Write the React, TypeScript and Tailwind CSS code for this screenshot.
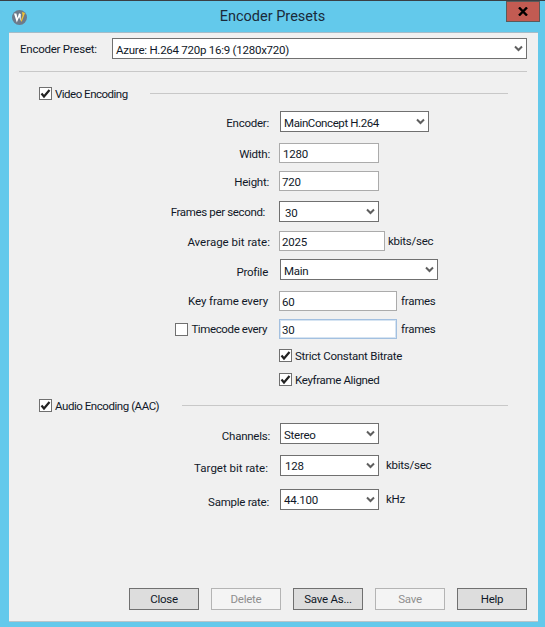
import React from "react";

function Chevron() {
  return (
    <svg width="9" height="7" viewBox="0 0 9 7" className="shrink-0">
      <path d="M1 1.5 L4.5 5 L8 1.5" fill="none" stroke="#5f5f5f" strokeWidth="2" />
    </svg>
  );
}

function Select({ value, cls }: { value: string; cls: string }) {
  return (
    <div className={`${cls} h-[21px] bg-white border border-[#707070] flex items-center justify-between pr-[3px] text-[#101828]`}>
      <span className="mt-[2px]">{value}</span>
      <Chevron />
    </div>
  );
}

function Input({ value, cls, focus }: { value: string; cls: string; focus?: boolean }) {
  return (
    <div
      className={`${cls} h-[20px] bg-white flex items-center pl-[2px] text-[#101828] border ${
        focus ? "border-[#a3c0e0] shadow-[inset_0_0_0_1px_#d6e4f2]" : "border-[#ababab]"
      }`}
    >
      <span className="mt-[2px]">{value}</span>
    </div>
  );
}

function Check({ checked = true }: { checked?: boolean }) {
  return (
    <div className="w-[13px] h-[13px] border border-[#707070] bg-white flex items-center justify-center shrink-0">
      {checked && (
        <svg width="11" height="11" viewBox="0 0 11 11">
          <path d="M1.5 5.5 L4 8.5 L9.5 2" fill="none" stroke="#222" strokeWidth="2.2" />
        </svg>
      )}
    </div>
  );
}

function Row({ label, labelCls, top, children }: { label: React.ReactNode; labelCls: string; top: string; children: React.ReactNode }) {
  return (
    <div className={`flex items-center ${top}`}>
      <div className={`${labelCls} shrink-0 flex justify-end items-center text-[#101828]`}>{label}</div>
      {children}
    </div>
  );
}

function Unit({ children, cls }: { children: string; cls: string }) {
  return <span className={`${cls} text-[#101828]`}>{children}</span>;
}

function Btn({ label, disabled }: { label: string; disabled?: boolean }) {
  return (
    <div
      className={`w-[70px] h-[22px] border flex items-center justify-center ${
        disabled ? "border-[#b4b4b4] bg-[#f4f4f4] text-[#8f8f8f]" : "border-[#707070] bg-[#dddddd] text-[#101828]"
      }`}
    >
      {label}
    </div>
  );
}

export default function App() {
  return (
    <div className="w-[545px] h-[627px] bg-[#63c9eb] border-t border-[#3a3f44] flex flex-col relative overflow-hidden text-[11.5px] leading-[16px] tracking-[-0.25px] font-['Roboto',sans-serif]">
      <div className="h-[31px] shrink-0 flex items-center pl-[12px]">
        <svg width="15" height="15" viewBox="0 0 15 15" className="shrink-0 mt-[2px]">
          <circle cx="7.5" cy="7.5" r="7.5" fill="#6c7a8a" />
          <path d="M2 3.5 L4.8 12.5 L7.2 7 L8.6 11 L8.8 4 L7 3.2 L5.5 8 L4.4 3.5 Z" fill="#fff" />
          <path d="M10 2 L13 3 L9.6 12 L8.8 10.5 L10.6 5.5 Z" fill="#f2c230" />
        </svg>
        <div className="flex-1 text-center text-[14.5px] leading-[20px] tracking-normal text-[#1a2a3a] pr-[27px]">Encoder Presets</div>
        <div className="absolute right-[5px] top-0 w-[34px] h-[21px] bg-[#c25b52] border border-[#5a5a5a] flex items-center justify-center">
          <svg width="10" height="9" viewBox="0 0 10 9">
            <path d="M1 0.5 L9 8.5 M9 0.5 L1 8.5" stroke="#000" strokeWidth="2.4" />
          </svg>
        </div>
      </div>

      <div className="ml-[9px] mr-[7px] mb-[5px] flex-1 bg-[#f0f0f0] border-t border-b border-t-[#a5bcc8] border-b-[#b8c4c8] flex flex-col pl-[10px] pr-[11px] pt-[5px] pb-[11px] min-h-0">
        <div className="flex items-center h-[21px]">
          <span className="w-[93px] pl-[1px] mt-[1px] text-[#101828]">Encoder Preset:</span>
          <Select value="Azure: H.264 720p 16:9 (1280x720)" cls="w-[415px] pl-[3px]" />
        </div>
        <div className="h-px bg-[#c8c8c8] mt-[12px] w-[508px]" />

        <div className="flex items-center mt-[15px] pl-[20px] h-[13px]">
          <Check />
          <span className="ml-[3px] text-[#101828] tracking-[-0.5px]">Video Encoding</span>
          <div className="flex-1 h-px bg-[#c8c8c8] ml-[22px] mr-[19px]" />
        </div>

        <Row label="Encoder:" labelCls="w-[250px] mt-[3px]" top="mt-[11px]">
          <div className="ml-[11px]"><Select value="MainConcept H.264" cls="w-[149px] pl-[3px] tracking-[-0.4px]" /></div>
        </Row>
        <Row label="Width:" labelCls="w-[251px] mt-[2px]" top="mt-[11px]">
          <div className="ml-[9px]"><Input value="1280" cls="w-[100px] pl-[3px]" /></div>
        </Row>
        <Row label="Height:" labelCls="w-[250px] mt-[2px]" top="mt-[8px]">
          <div className="ml-[10px]"><Input value="720" cls="w-[100px]" /></div>
        </Row>
        <Row label="Frames per second:" labelCls="w-[246px] tracking-[-0.35px]" top="mt-[10px]">
          <div className="ml-[14px]"><Select value="30" cls="w-[100px] pl-[5px]" /></div>
        </Row>
        <Row label="Average bit rate:" labelCls="w-[251px] mt-[2px] tracking-normal" top="mt-[9px]">
          <div className="ml-[9px]"><Input value="2025" cls="w-[106px]" /></div>
          <Unit cls="ml-[3px]">kbits/sec</Unit>
        </Row>
        <Row label="Profile" labelCls="w-[249px] mt-[4px]" top="mt-[8px]">
          <div className="ml-[12px]"><Select value="Main" cls="w-[158px] pl-[3px]" /></div>
        </Row>
        <Row label="Key frame every" labelCls="w-[249px] tracking-[-0.1px]" top="mt-[11px]">
          <div className="ml-[11px]"><Input value="60" cls="w-[118px]" /></div>
          <Unit cls="ml-[4px]">frames</Unit>
        </Row>
        <Row
          label={
            <span className="flex items-center">
              <Check checked={false} />
              <span className="ml-[3px] tracking-[-0.38px]">Timecode every</span>
            </span>
          }
          labelCls="w-[248px]"
          top="mt-[8px]"
        >
          <div className="ml-[12px]"><Input value="30" cls="w-[118px]" focus /></div>
          <Unit cls="ml-[4px]">frames</Unit>
        </Row>

        <div className="flex items-center mt-[10px] pl-[260px] h-[13px] text-[#101828]">
          <Check />
          <span className="ml-[3px]">Strict Constant Bitrate</span>
        </div>
        <div className="flex items-center mt-[11px] pl-[260px] h-[13px] text-[#101828]">
          <Check />
          <span className="ml-[3px] tracking-[-0.35px]">Keyframe Aligned</span>
        </div>

        <div className="flex items-center mt-[13px] pl-[20px] h-[13px]">
          <Check />
          <span className="ml-[3px] text-[#101828] tracking-[-0.45px]">Audio Encoding (AAC)</span>
          <div className="flex-1 h-px bg-[#c8c8c8] ml-[23px] mr-[19px]" />
        </div>

        <Row label="Channels:" labelCls="w-[251px] mt-[4px]" top="mt-[11px]">
          <div className="ml-[10px]"><Select value="Stereo" cls="w-[99px] pl-[3px]" /></div>
        </Row>
        <Row label="Target bit rate:" labelCls="w-[249px] mt-[6px] tracking-normal" top="mt-[10px]">
          <div className="ml-[12px]"><Select value="128" cls="w-[99px] pl-[4px]" /></div>
          <Unit cls="ml-[7px]">kbits/sec</Unit>
        </Row>
        <Row label="Sample rate:" labelCls="w-[250px] mt-[6px]" top="mt-[12px]">
          <div className="ml-[11px]"><Select value="44.100" cls="w-[99px] pl-[3px]" /></div>
          <Unit cls="ml-[7px]">kHz</Unit>
        </Row>

        <div className="mt-auto flex gap-[12px] pl-[110px]">
          <Btn label="Close" />
          <Btn label="Delete" disabled />
          <Btn label="Save As..." />
          <Btn label="Save" disabled />
          <Btn label="Help" />
        </div>
      </div>
    </div>
  );
}
